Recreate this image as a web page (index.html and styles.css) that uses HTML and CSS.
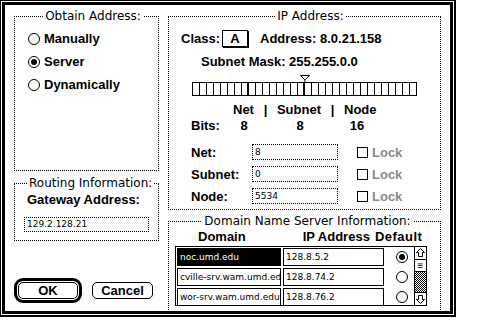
FILE: index.html
```html
<!DOCTYPE html>
<html lang="en">
<head>
    <meta charset="UTF-8">
    <title>MacTCP</title>
    <link rel="stylesheet" href="styles.css">
</head>
<body>

<div class="window">
    <div class="frame">
        <div class="col-left">
            <fieldset class="group obtain">
                <legend>Obtain Address:</legend>
                <div class="radio-row"><span class="radio"></span>Manually</div>
                <div class="radio-row"><span class="radio on"></span>Server</div>
                <div class="radio-row"><span class="radio"></span>Dynamically</div>
            </fieldset>

            <fieldset class="group routing">
                <legend>Routing Information:</legend>
                <div class="gw-label">Gateway Address:</div>
                <div class="field gw-field">129.2.128.21</div>
            </fieldset>

            <div class="buttons">
                <div class="default-ring"><div class="btn ok">OK</div></div>
                <div class="btn cancel">Cancel</div>
            </div>
        </div>

        <div class="col-right">
            <fieldset class="group ip">
                <legend>IP Address:</legend>
                <div class="class-row">
                    <span>Class:</span>
                    <span class="class-box">A</span>
                    <span class="address">Address: 8.0.21.158</span>
                </div>
                <div class="mask-row">Subnet Mask: 255.255.0.0</div>

                <svg class="slider" width="226" height="21" viewBox="0 0 226 21">
                    <path d="M108.5 0.5 h9 l-4 4 h-1 z" fill="#fff" stroke="#000"/>
                    <line x1="113" y1="4" x2="113" y2="8" stroke="#000"/>
                    <rect x="0.5" y="7.5" width="224" height="13" fill="#fff" stroke="#000"/>
                    <path stroke="#000" d="M7.5 8v13M14.5 8v13M21.5 8v13M28.5 8v13M35.5 8v13M42.5 8v13M49.5 8v13M63.5 8v13M70.5 8v13M77.5 8v13M84.5 8v13M91.5 8v13M98.5 8v13M105.5 8v13M119.5 8v13M126.5 8v13M133.5 8v13M140.5 8v13M147.5 8v13M154.5 8v13M161.5 8v13M168.5 8v13M175.5 8v13M182.5 8v13M189.5 8v13M196.5 8v13M203.5 8v13M210.5 8v13M217.5 8v13"/>
                    <rect x="55" y="8" width="2" height="13" fill="#000"/>
                    <rect x="111" y="8" width="2" height="13" fill="#000"/>
                </svg>

                <div class="parts-row">
                    <span>Net</span><span class="sep">|</span><span>Subnet</span><span class="sep">|</span><span>Node</span>
                </div>
                <div class="bits-row">
                    <span>Bits:</span><span class="num">8</span><span class="num">8</span><span class="num">16</span>
                </div>

                <div class="part-row">
                    <span class="part-label">Net:</span>
                    <span class="field part-field">8</span>
                    <span class="check"></span><span class="lock">Lock</span>
                </div>
                <div class="part-row">
                    <span class="part-label">Subnet:</span>
                    <span class="field part-field">0</span>
                    <span class="check"></span><span class="lock">Lock</span>
                </div>
                <div class="part-row">
                    <span class="part-label">Node:</span>
                    <span class="field part-field">5534</span>
                    <span class="check"></span><span class="lock">Lock</span>
                </div>
            </fieldset>

            <fieldset class="group dns">
                <legend>Domain Name Server Information:</legend>
                <div class="dns-head">
                    <span class="h-domain">Domain</span>
                    <span class="h-ip">IP Address</span>
                    <span class="h-default">Default</span>
                </div>
                <div class="dns-list">
                    <div class="dns-rows">
                        <div class="dns-row">
                            <span class="cell domain selected">noc.umd.edu</span>
                            <span class="cell ip-cell">128.8.5.2</span>
                            <span class="radio on"></span>
                        </div>
                        <div class="dns-row">
                            <span class="cell domain">cville-srv.wam.umd.edu</span>
                            <span class="cell ip-cell">128.8.74.2</span>
                            <span class="radio"></span>
                        </div>
                        <div class="dns-row">
                            <span class="cell domain">wor-srv.wam.umd.edu</span>
                            <span class="cell ip-cell">128.8.76.2</span>
                            <span class="radio"></span>
                        </div>
                    </div>
                    <div class="scrollbar">
                        <svg class="arrow" width="11" height="12" viewBox="0 0 11 12">
                            <path d="M5.5 1.5 l4 4 h-2 v4 h-4 v-4 h-2 z" fill="#fff" stroke="#000"/>
                        </svg>
                        <div class="thumb">&#8801;</div>
                        <div class="track"></div>
                        <svg class="arrow" width="11" height="12" viewBox="0 0 11 12">
                            <path d="M5.5 10.5 l4 -4 h-2 v-4 h-4 v4 h-2 z" fill="#fff" stroke="#000"/>
                        </svg>
                    </div>
                </div>
            </fieldset>
        </div>
    </div>
</div>

</body>
</html>
```

FILE: styles.css
```css
body {
    margin: 0;
    background-color: #fff;
    color: #000;
    font-family: 'Liberation Sans', Arial, sans-serif;
    font-size: 13px;
}

.window {
    width: 456px;
    height: 317px;
    box-sizing: border-box;
    border: 1px solid #000;
    border-right-width: 2px;
    border-bottom-width: 2px;
    padding: 1px;
}

.frame {
    height: 100%;
    box-sizing: border-box;
    border: 3px solid #000;
    padding: 4px 0 0 9px;
    display: grid;
    grid-template-columns: 145px 273px;
    column-gap: 9px;
    align-items: start;
}

/* group boxes */

.group {
    margin: 0;
    padding: 0;
    min-width: 0;
    box-sizing: border-box;
    border: 1px dotted #000;
}

.group legend {
    margin: 0 auto;
    padding: 0 2px;
    line-height: 14px;
    font-family: 'DejaVu Sans', sans-serif;
    font-size: 12px;
}

.col-left, .col-right {
    display: flex;
    flex-direction: column;
}

/* obtain address */

.obtain {
    height: 162px;
    padding: 4px 0 0 13px;
}

.radio-row {
    display: flex;
    align-items: center;
    gap: 4px;
    height: 23px;
    font-weight: bold;
}

.radio {
    width: 12px;
    height: 12px;
    box-sizing: border-box;
    border: 1px solid #000;
    border-radius: 50%;
    display: flex;
    align-items: center;
    justify-content: center;
    flex-shrink: 0;
}

.radio.on::after {
    content: "";
    width: 6px;
    height: 6px;
    border-radius: 50%;
    background-color: #000;
}

/* routing */

.routing {
    margin-top: 5px;
    height: 65px;
    padding: 0 0 0 9px;
}

.routing legend {
    margin: 0 0 0 4px;
    padding: 0 1px;
}

.gw-label {
    font-weight: bold;
    margin: 2px 0 0 3px;
    line-height: 16px;
}

.field {
    display: block;
    box-sizing: border-box;
    border: 1px dotted #000;
    font-family: 'DejaVu Sans', sans-serif;
    font-size: 9px;
    line-height: 13px;
    padding-left: 2px;
}

.gw-field {
    width: 125px;
    height: 15px;
    margin-top: 9px;
}

/* buttons */

.buttons {
    display: flex;
    align-items: center;
    margin-top: 37px;
}

.default-ring {
    border: 3px solid #000;
    border-radius: 9px;
    padding: 1px;
}

.btn {
    box-sizing: border-box;
    height: 17px;
    border: 1px solid #000;
    border-radius: 5px;
    font-weight: bold;
    text-align: center;
    line-height: 15px;
}

.ok {
    width: 60px;
}

.cancel {
    width: 61px;
    margin-left: 10px;
}

/* ip address */

.ip {
    height: 201px;
    padding: 0 0 0 12px;
}

.ip > div, .ip > svg {
    font-weight: bold;
}

.class-row {
    display: flex;
    align-items: center;
    height: 18px;
    margin-top: 6px;
}

.class-box {
    width: 26px;
    height: 17px;
    box-sizing: border-box;
    border: 1px solid #000;
    box-shadow: 1px 1px 0 #000;
    margin-left: 2px;
    text-align: center;
    line-height: 15px;
}

.address {
    margin-left: 12px;
}

.mask-row {
    margin: 7px 0 0 20px;
    line-height: 16px;
}

.slider {
    display: block;
    margin: 5px 0 0 11px;
}

.parts-row {
    display: flex;
    margin: 6px 0 0 52px;
    line-height: 16px;
}

.parts-row .sep {
    width: 23px;
    text-align: center;
}

.bits-row {
    display: grid;
    grid-template-columns: 25px 56px 56px 58px;
    margin-left: 10px;
    line-height: 16px;
}

.bits-row .num {
    text-align: center;
}

.part-row {
    display: flex;
    align-items: center;
    height: 16px;
    margin: 6px 0 0 10px;
}

.bits-row + .part-row {
    margin-top: 10px;
}

.part-label {
    width: 61px;
}

.part-field {
    width: 86px;
    height: 16px;
    font-weight: normal;
    line-height: 14px;
}

.check {
    width: 11px;
    height: 11px;
    box-sizing: border-box;
    border: 1px solid #000;
    margin-left: 19px;
}

.lock {
    margin-left: 4px;
    color: #8a8a8a;
}

/* domain name servers */

.dns {
    margin-top: 4px;
    height: 100px;
    padding: 0 0 0 6px;
}

.dns-head {
    display: flex;
    font-weight: bold;
    line-height: 16px;
    margin-top: 1px;
}

.h-domain {
    margin-left: 23px;
}

.h-ip {
    margin-left: 57px;
}

.h-default {
    margin-left: 5px;
    letter-spacing: 0.5px;
}

.dns-list {
    display: flex;
    margin-top: 1px;
    width: 252px;
    height: 60px;
    box-sizing: border-box;
    border: 1px solid #000;
}

.dns-rows {
    flex: 1;
}

.dns-row {
    display: flex;
    align-items: center;
    height: 20px;
}

.cell {
    box-sizing: border-box;
    height: 18px;
    border: 1px solid #000;
    font-family: 'DejaVu Sans', sans-serif;
    font-size: 9px;
    line-height: 16px;
    padding-left: 2px;
    white-space: nowrap;
    overflow: hidden;
}

.domain {
    width: 104px;
    margin-left: 1px;
}

.domain.selected {
    background-color: #000;
    color: #fff;
}

.ip-cell {
    width: 101px;
    margin-left: 2px;
}

.dns-row .radio {
    margin-left: 12px;
}

.scrollbar {
    width: 12px;
    box-sizing: border-box;
    border-left: 1px solid #000;
    display: flex;
    flex-direction: column;
}

.arrow {
    display: block;
}

.thumb {
    height: 11px;
    border-top: 1px solid #000;
    border-bottom: 1px solid #000;
    font-size: 10px;
    line-height: 11px;
    text-align: center;
}

.track {
    flex: 1;
    background: repeating-conic-gradient(#000 0 25%, #fff 0 50%) 0 0 / 2px 2px;
    border-bottom: 1px solid #000;
}
```
